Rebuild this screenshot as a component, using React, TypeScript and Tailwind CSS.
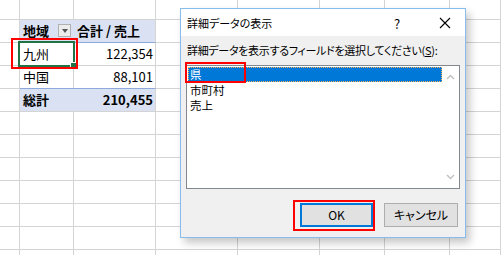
import React from "react";

const colW = [20, 54, 82, 82, 82, 65, 65, 51];
const font = { fontFamily: '"Noto Sans CJK JP", "Noto Sans", sans-serif', fontFeatureSettings: '"palt"' };

function Row({ h, children }: { h: string; children?: React.ReactNode }) {
  return <div className={`flex ${h}`}>{children}</div>;
}

function Cell({ w, cls = "", children }: { w: number; cls?: string; children?: React.ReactNode }) {
  return (
    <div
      className={`shrink-0 border-r border-b border-[#d4d4d4] flex items-center ${cls}`}
      style={{ width: w }}
    >
      {children}
    </div>
  );
}

function EmptyRow({ first }: { first?: boolean }) {
  return (
    <Row h={first ? "h-[20px]" : "h-[23px]"}>
      {colW.map((w, i) => (
        <Cell key={i} w={w} />
      ))}
    </Row>
  );
}

export default function App() {
  return (
    <div className="relative w-[501px] h-[255px] overflow-hidden bg-white text-[13px] text-black" style={font}>
      {/* sheet */}
      <div className="flex flex-col">
        <EmptyRow first />
        <Row h="h-[23px]">
          <Cell w={20} />
          <div className="w-[54px] shrink-0 bg-[#d9e1f2] border-b border-[#8ea9db] flex items-center pl-[3px] font-bold relative">
            地域
            <div className="absolute left-[38px] top-[4px] w-[13px] h-[13px] border border-[#b0b0b0] bg-[#ececec] flex items-center justify-center">
              <div className="w-0 h-0 border-l-[3.5px] border-r-[3.5px] border-t-[4px] border-l-transparent border-r-transparent border-t-[#555]" />
            </div>
          </div>
          <div className="w-[82px] shrink-0 bg-[#d9e1f2] border-b border-r border-b-[#8ea9db] border-r-[#d4d4d4] flex items-center pl-[3px] font-bold whitespace-nowrap">
            合計 / 売上
          </div>
          {colW.slice(3).map((w, i) => (
            <Cell key={i} w={w} />
          ))}
        </Row>
        <Row h="h-[23px]">
          <Cell w={20} />
          <Cell w={54} cls="pl-[3px]">九州</Cell>
          <Cell w={82} cls="justify-end pr-[2px]">122,354</Cell>
          {colW.slice(3).map((w, i) => (
            <Cell key={i} w={w} />
          ))}
        </Row>
        <Row h="h-[23px]">
          <Cell w={20} />
          <Cell w={54} cls="pl-[3px]">中国</Cell>
          <Cell w={82} cls="justify-end pr-[2px]">88,101</Cell>
          {colW.slice(3).map((w, i) => (
            <Cell key={i} w={w} />
          ))}
        </Row>
        <Row h="h-[23px]">
          <Cell w={20} />
          <div className="w-[136px] shrink-0 bg-[#d9e1f2] border-t border-[#8ea9db] -mt-px border-b border-b-[#d4d4d4] border-r border-r-[#d4d4d4] flex items-center justify-between pl-[3px] pr-[2px] font-bold h-[24px]">
            <span>総計</span>
            <span>210,455</span>
          </div>
          {colW.slice(3).map((w, i) => (
            <Cell key={i} w={w} />
          ))}
        </Row>
        {Array.from({ length: 7 }).map((_, i) => (
          <EmptyRow key={i} />
        ))}
      </div>

      {/* selection box */}
      <div className="absolute left-[18px] top-[41px] w-[57px] h-[26px] border-2 border-[#217346]" />
      <div className="absolute left-[71px] top-[63px] w-[5px] h-[5px] bg-[#217346] border border-white box-content -translate-x-px -translate-y-px" />
      <div className="absolute left-[11px] top-[38px] w-[67px] h-[31px] border-2 border-[#ff0000]" />

      {/* dialog */}
      <div
        className="absolute left-[180px] top-[8px] w-[286px] h-[230px] border border-[#86bdec] bg-[#f0f0f0] flex flex-col text-[11px]"
        style={{ boxShadow: "4px 5px 8px rgba(0,0,0,0.22)" }}
      >
        <div className="h-[27px] bg-white flex items-center pl-[6px] relative shrink-0">
          <span className="mt-[1px] text-[11px]">詳細データの表示</span>
          <span className="absolute left-[213px] top-[5px] text-[13px]">?</span>
          <svg className="absolute left-[258px] top-[8px]" width="12" height="12" viewBox="0 0 12 12">
            <path d="M1 1 L11 11 M11 1 L1 11" stroke="#000" strokeWidth="1.1" />
          </svg>
        </div>
        <div className="pl-[6px] mt-[5px] h-[18px] flex items-center whitespace-nowrap text-[11px] tracking-[-0.3px]">
          詳細データを表示するフィールドを選択してください(<span className="underline">S</span>):
        </div>
        <div className="ml-[5px] mt-[6px] w-[274px] h-[124px] border border-[#828790] bg-white flex text-[11.5px]">
          <div className="flex-1 flex flex-col pt-[1px] pl-[1px]">
            <div className="h-[15px] leading-[15px] bg-[#0078d7] text-white flex items-center pl-[2px] outline-1 outline-dotted outline-[#f7b35a] -outline-offset-1">
              県
            </div>
            <div className="h-[15px] leading-[15px] flex items-center pl-[2px] mt-[1px]">市町村</div>
            <div className="h-[15px] leading-[15px] flex items-center pl-[2px]">売上</div>
          </div>
          <div className="w-[17px] flex flex-col items-center justify-between py-[8px]">
            <svg width="9" height="6" viewBox="0 0 9 6">
              <path d="M1 5 L4.5 1.5 L8 5" stroke="#c2c2c2" strokeWidth="1.5" fill="none" />
            </svg>
            <svg width="9" height="6" viewBox="0 0 9 6">
              <path d="M1 1 L4.5 4.5 L8 1" stroke="#c2c2c2" strokeWidth="1.5" fill="none" />
            </svg>
          </div>
        </div>
        <div className="flex justify-end gap-[11px] mt-[14px] pr-[7px] text-[12px]">
          <div className="w-[73px] h-[24px] border-2 border-[#0078d7] bg-[#e1e1e1] flex items-center justify-center">OK</div>
          <div className="w-[74px] h-[24px] border border-[#adadad] bg-[#e1e1e1] flex items-center justify-center">キャンセル</div>
        </div>
      </div>

      {/* red highlight boxes */}
      <div className="absolute left-[185px] top-[62px] w-[61px] h-[21px] border-2 border-[#ff0000]" />
      <div className="absolute left-[293px] top-[200px] w-[82px] h-[31px] border-2 border-[#ff0000]" />
    </div>
  );
}
